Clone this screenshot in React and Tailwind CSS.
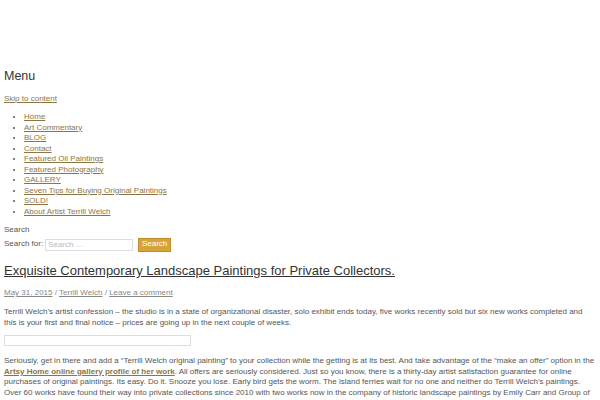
import React from "react";

const menuItems = [
  "Home",
  "Art Commentary",
  "BLOG",
  "Contact",
  "Featured Oil Paintings",
  "Featured Photography",
  "GALLERY",
  "Seven Tips for Buying Original Paintings",
  "SOLD!",
  "About Artist Terrill Welch",
];

export default function App() {
  return (
    <div className="min-h-[400px] bg-white px-[4px] pt-[69px] font-['Liberation_Sans',Arial,sans-serif] text-[8px] leading-[10.5px] text-[#555]">
      {/* Site nav */}
      <h2 className="text-[12.5px] leading-[15px] text-[#333]">Menu</h2>
      <a href="#" className="mt-[10px] block text-[#8c7544] underline">
        Skip to content
      </a>
      <ul className="mt-[7.5px] list-disc pl-[20px]">
        {menuItems.map((item) => (
          <li key={item}>
            <a href="#" className="text-[#8c7544] underline">
              {item}
            </a>
          </li>
        ))}
      </ul>

      {/* Search */}
      <div className="mt-[8px]">Search</div>
      <form className="mt-[2px] flex h-[14px] items-center">
        <label className="mr-[2px]">Search for:</label>
        <input
          type="text"
          placeholder="Search …"
          className="h-[12px] w-[88px] border border-[#ddd] px-[2px] text-[8px] text-[#555] placeholder:text-[#bbb]"
        />
        <button
          type="button"
          className="ml-[5px] h-[14px] w-[33px] border border-[#c08c2a] bg-[#d9a33b] text-[8px] text-white"
        >
          Search
        </button>
      </form>

      {/* Post */}
      <h1 className="mt-[11.5px] text-[13px] leading-[15px] text-[#333] underline">
        Exquisite Contemporary Landscape Paintings for Private Collectors.
      </h1>
      <div className="mt-[10px] text-[#888]">
        <a href="#" className="underline">May 31, 2015</a> /{" "}
        <a href="#" className="underline">Terrill Welch</a> /{" "}
        <a href="#" className="underline">Leave a comment</a>
      </div>
      <p className="mt-[8.5px]">
        Terrill Welch’s artist confession – the studio is in a state of organizational disaster, solo exhibit ends
        today, five works recently sold but six new works completed and this is your first and final notice – prices
        are going up in the next couple of weeks.
      </p>
      <div className="mt-[7px] h-[11px] w-[187px] border border-[#ddd]"></div>
      <p className="mt-[10px]">
        Seriously, get in there and add a “Terrill Welch original painting” to your collection while the getting is
        at its best. And take advantage of the “make an offer” option in the{" "}
        <a href="#" className="font-bold text-[#8c7544] underline">
          Artsy Home online gallery profile of her work
        </a>
        . All offers are seriously considered. Just so you know, there is a thirty-day artist satisfaction guarantee
        for online purchases of original paintings. Its easy. Do it. Snooze you lose. Early bird gets the worm. The
        island ferries wait for no one and neither do Terrill Welch’s paintings. Over 60 works have found their way
        into private collections since 2010 with two works now in the company of historic landscape paintings by
        Emily Carr and Group of Seven painters.
      </p>
    </div>
  );
}
